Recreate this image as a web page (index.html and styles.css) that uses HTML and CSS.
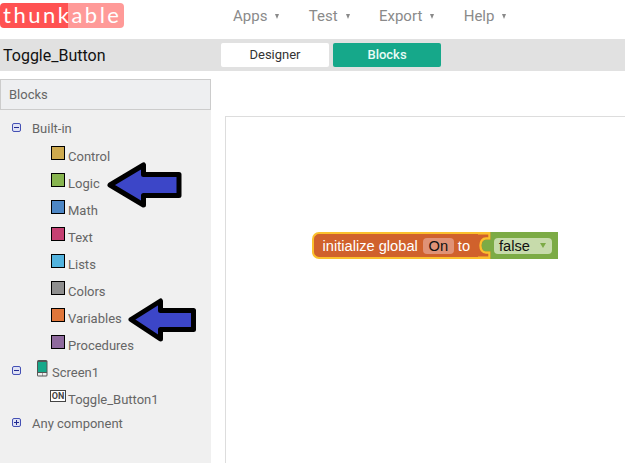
FILE: index.html
```html
<!DOCTYPE html>
<html lang="en">
<head>
<meta charset="utf-8">
<title>Thunkable Blocks</title>
<link rel="stylesheet" href="styles.css">
</head>
<body>
<header class="topbar">
  <div class="logo">thunkable</div>
  <nav class="nav">
    <div class="nav-item">Apps<i class="caret"></i></div>
    <div class="nav-item">Test<i class="caret"></i></div>
    <div class="nav-item">Export<i class="caret"></i></div>
    <div class="nav-item">Help<i class="caret"></i></div>
  </nav>
</header>
<div class="toolbar">
  <div class="project">Toggle_Button</div>
  <div class="tab tab-white">Designer</div>
  <div class="tab tab-green">Blocks</div>
</div>
<main class="main">
  <aside class="sidebar">
    <div class="side-head">Blocks</div>
    <div class="tree">
      <div class="row top first"><i class="tog minus"></i><span>Built-in</span></div>
      <div class="row cat"><i class="sw c-control"></i><span>Control</span></div>
      <div class="row cat"><i class="sw c-logic"></i><span>Logic</span></div>
      <div class="row cat"><i class="sw c-math"></i><span>Math</span></div>
      <div class="row cat"><i class="sw c-text"></i><span>Text</span></div>
      <div class="row cat"><i class="sw c-lists"></i><span>Lists</span></div>
      <div class="row cat"><i class="sw c-colors"></i><span>Colors</span></div>
      <div class="row cat"><i class="sw c-vars"></i><span>Variables</span></div>
      <div class="row cat"><i class="sw c-procs"></i><span>Procedures</span></div>
      <div class="row screen"><i class="tog minus"></i>
        <svg class="phone" width="11" height="17" viewBox="0 0 11 17"><rect x="0" y="0" width="10.500" height="16.500" rx="1.500" fill="#555"/><rect x="1" y="2" width="8.500" height="10" fill="#16a88a"/><rect x="1" y="13" width="4" height="2.500" fill="#eee"/><rect x="5.500" y="13" width="4" height="2.500" fill="#eee"/></svg>
        <span>Screen1</span></div>
      <div class="row cat toggle"><i class="on-icon">ON</i><span>Toggle_Button1</span></div>
      <div class="row top any"><i class="tog plus"></i><span>Any component</span></div>
    </div>
  </aside>
  <section class="canvas">
    <div class="block">
      <div class="block-var">
        <span>initialize global</span><span class="pill-on">On</span><span>to</span>
      </div>
      <svg class="notch" width="13" height="27" viewBox="0 0 13 27"><rect width="13" height="27" fill="#d0612c"/><path d="M0 1.200H11.500V6.500H8C4.500 6.500 2.500 9.500 2.500 13.500C2.500 17.500 4.500 20.500 8 20.500H11.500V25.800H0" fill="none" stroke="#fbc02d" stroke-width="2.400"/><path d="M13 7.700H8C5.500 7.700 3.700 10 3.700 13.500C3.700 17 5.500 19.300 8 19.300H13Z" fill="#7cab45"/><rect x="12.500" width="0.500" height="27" fill="#7cab45"/></svg>
      <div class="block-bool"><span class="pill-false">false<i class="mini-caret"></i></span></div>
    </div>
  </section>
</main>
<svg class="arrow arrow-logic" width="78" height="50" viewBox="0 0 78 50"><polygon points="5,25 38.500,5 38.500,14.500 74,14.500 74,35.500 38.500,35.500 38.500,45" fill="#3c46c8" stroke="#000" stroke-width="5" stroke-linejoin="round"/></svg>
<svg class="arrow arrow-vars" width="72" height="50" viewBox="0 0 72 50"><polygon points="6,24.500 35.500,6 35.500,15.500 68.500,15.500 68.500,34.500 35.500,34.500 35.500,44" fill="#3c46c8" stroke="#000" stroke-width="5" stroke-linejoin="round"/></svg>
</body>
</html>
```
FILE: styles.css
```css
* { box-sizing: border-box; }
html, body { margin: 0; padding: 0; }
body {
  position: relative;
  width: 625px;
  height: 463px;
  overflow: hidden;
  background: #fff;
  font-family: Roboto, sans-serif;
}
i { font-style: normal; display: block; }

.topbar { display: flex; height: 39px; align-items: flex-start; }
.logo {
  flex: none;
  width: 124px;
  height: 25px;
  margin-top: 3px;
  padding-left: 3px;
  border-radius: 4px;
  background: linear-gradient(90deg, #ff5252 68px, #ff9a98 68px);
  font-family: Lato, sans-serif;
  font-size: 22px;
  line-height: 24px;
  letter-spacing: 2.500px;
  color: #fff;
  white-space: nowrap;
}
.nav { display: flex; margin-left: 109px; margin-top: 7px; color: #8a8a8a; font-size: 15px; line-height: 18px; }
.nav-item { display: flex; align-items: center; margin-right: 29px; }
.nav-item + .nav-item { margin-left: 0.400px; }
.caret {
  width: 0; height: 0; margin-left: 8px;
  border-left: 2.500px solid transparent;
  border-right: 2.500px solid transparent;
  border-top: 5px solid #8a8a8a;
}

.toolbar { display: flex; align-items: center; height: 32px; background: #e1e1e1; }
.project { width: 221px; padding-left: 3px; font-size: 16px; color: #111; }
.tab {
  width: 108px; height: 24px; margin-right: 4px;
  border-radius: 2px; text-align: center; font-size: 13px; line-height: 24px;
}
.tab-white { background: #fff; color: #333; }
.tab-green { background: #16a88a; color: #e8fbf6; font-weight: 500; }

.main { display: flex; height: 392px; padding-top: 8px; }
.sidebar { width: 211px; flex: none; background: #f0f0f0; }
.side-head {
  height: 31px; padding-left: 8px;
  background: #eeeff1; border: 1px solid #ccc;
  font-size: 13px; line-height: 29px; color: #666;
}
.tree { padding-top: 5px; font-size: 13px; color: #666; }
.row { display: flex; align-items: center; height: 27px; }
.row.first { margin-bottom: 1px; }
.row.top { padding-left: 12px; }
.row.top span { margin-left: 11px; }
.row.cat { padding-left: 51px; }
.row.cat span { margin-left: 3px; }
.row.toggle { padding-left: 50px; }
.row.toggle span { margin-left: 2px; }
.row.any { height: 21px; }
.row.screen { padding-left: 12px; }
.row.screen span { margin-left: 4px; }

.tog {
  position: relative; flex: none; width: 9px; height: 9px; margin-top: -3px;
  border: 1px solid #4450b4; border-radius: 2px; background: #dfe2f4;
}
.screen .tog { margin-top: -5px; }
.tog::before {
  content: ""; position: absolute; left: 1px; top: 3px; width: 5px; height: 1px; background: #222a90;
}
.tog.plus::after {
  content: ""; position: absolute; left: 3px; top: 1px; width: 1px; height: 5px; background: #222a90;
}
.phone { margin: -8px 0 0 16px; flex: none; }

.sw { flex: none; width: 14px; height: 14px; margin-top: -7px; border: 1px solid #000; }
.c-control { background: #cda94e; }
.c-logic { background: #87b44f; }
.c-math { background: #4d86c4; }
.c-text { background: #c54072; }
.c-lists { background: #52b3de; }
.c-colors { background: #8e8e8e; }
.c-vars { background: #e0763a; }
.c-procs { background: #8f6a9e; }
.on-icon {
  flex: none; width: 16px; height: 12px; margin-top: -7px;
  border: 1px solid #444; background: #fff;
  font-size: 9px; line-height: 10px; font-weight: 700; text-align: center; color: #444;
}

.canvas {
  position: relative; flex: 1; margin: 37px 0 0 14px;
  background: #fff;
  border-left: 1px solid #ddd; border-top: 1px solid #ddd;
}
.block {
  position: absolute; left: 86px; top: 115px;
  display: flex; height: 27px;
  font-family: "Liberation Sans", sans-serif; font-size: 14.670px;
}
.block-var {
  display: flex; align-items: center; gap: 4px;
  width: 166px; padding-left: 8.500px;
  background: #d0612c; color: #fff;
  border: 2.400px solid #fbc02d; border-right: 0; border-radius: 7px 0 0 7px;
}
.pill-on {
  flex: none; width: 31px; height: 16px; margin: 0 0 0 1px;
  background: #e09276; border-radius: 4px;
  color: #111; text-align: center; line-height: 16px;
}
.notch { display: block; flex: none; }
.block-bool {
  display: flex; align-items: center; width: 67px; padding-left: 3px;
  background: #7cab45;
}
.pill-false {
  display: flex; align-items: center;
  width: 58px; height: 16px; padding-left: 5px;
  background: #c7dbab; border-radius: 4px; color: #111;
}
.mini-caret {
  width: 0; height: 0; margin-left: 10px;
  border-left: 3px solid transparent;
  border-right: 3px solid transparent;
  border-top: 5px solid #7cab45;
}

.arrow { position: absolute; }
.arrow-logic { left: 105px; top: 160px; }
.arrow-vars { left: 125px; top: 295px; }
```
